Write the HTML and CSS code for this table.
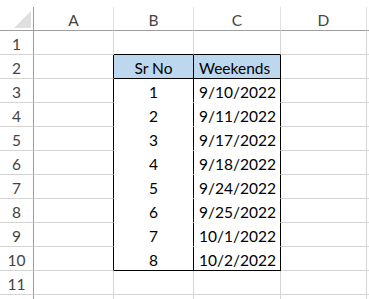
FILE: index.html
```html
<!DOCTYPE html>
<html>
<head>
<meta charset="utf-8">
<link rel="stylesheet" href="styles.css">
</head>
<body>
<div class="sheet">
  <div class="c corner"><span class="tri"></span></div>
  <div class="c ch">A</div>
  <div class="c ch">B</div>
  <div class="c ch">C</div>
  <div class="c ch">D</div>
  <div class="c ch end"></div>

  <div class="c rh">1</div>
  <div class="c"></div>
  <div class="c above"></div>
  <div class="c above"></div>
  <div class="c"></div>
  <div class="c end"></div>

  <div class="c rh">2</div>
  <div class="c left"></div>
  <div class="c t head mid">Sr No</div>
  <div class="c t head txt">Weekends</div>
  <div class="c"></div>
  <div class="c end"></div>

  <div class="c rh">3</div>
  <div class="c left"></div>
  <div class="c t mid">1</div>
  <div class="c t txt">9/10/2022</div>
  <div class="c"></div>
  <div class="c end"></div>

  <div class="c rh">4</div>
  <div class="c left"></div>
  <div class="c t mid">2</div>
  <div class="c t txt">9/11/2022</div>
  <div class="c"></div>
  <div class="c end"></div>

  <div class="c rh">5</div>
  <div class="c left"></div>
  <div class="c t mid">3</div>
  <div class="c t txt">9/17/2022</div>
  <div class="c"></div>
  <div class="c end"></div>

  <div class="c rh">6</div>
  <div class="c left"></div>
  <div class="c t mid">4</div>
  <div class="c t txt">9/18/2022</div>
  <div class="c"></div>
  <div class="c end"></div>

  <div class="c rh">7</div>
  <div class="c left"></div>
  <div class="c t mid">5</div>
  <div class="c t txt">9/24/2022</div>
  <div class="c"></div>
  <div class="c end"></div>

  <div class="c rh">8</div>
  <div class="c left"></div>
  <div class="c t mid">6</div>
  <div class="c t txt">9/25/2022</div>
  <div class="c"></div>
  <div class="c end"></div>

  <div class="c rh">9</div>
  <div class="c left"></div>
  <div class="c t mid">7</div>
  <div class="c t txt">10/1/2022</div>
  <div class="c"></div>
  <div class="c end"></div>

  <div class="c rh">10</div>
  <div class="c left"></div>
  <div class="c t last mid">8</div>
  <div class="c t last txt">10/2/2022</div>
  <div class="c"></div>
  <div class="c end"></div>

  <div class="c rh">11</div>
  <div class="c"></div>
  <div class="c"></div>
  <div class="c"></div>
  <div class="c"></div>
  <div class="c end"></div>

  <div class="c rh"></div>
  <div class="c"></div>
  <div class="c"></div>
  <div class="c"></div>
  <div class="c"></div>
  <div class="c end"></div>
</div>
</body>
</html>
```

FILE: styles.css
```css
html, body {
  margin: 0;
  padding: 0;
  background: #fff;
  overflow: hidden;
}
body {
  width: 369px;
  height: 299px;
}
.sheet {
  height: 299px;
  box-sizing: border-box;
  overflow: hidden;
  padding-top: 7px;
  display: grid;
  grid-template-columns: 34px 80px 80px 87px 86px 2px;
  grid-auto-rows: 24px;
  font-family: Lato, "Open Sans", sans-serif;
  font-size: 15.5px;
  color: #000;
}
.c {
  box-sizing: border-box;
  border-right: 1px solid #d4d4d4;
  border-bottom: 1px solid #d4d4d4;
  display: flex;
  align-items: center;
  padding-top: 2px;
  white-space: nowrap;
  overflow: hidden;
}
.end {
  border-right: none;
}
.corner {
  border-right: 1px solid #9e9e9e;
  border-bottom: 1px solid #9e9e9e;
  position: relative;
}
.tri {
  position: absolute;
  right: 2px;
  bottom: 2px;
  width: 0;
  height: 0;
  border-left: 17px solid transparent;
  border-bottom: 17px solid #dfdfdf;
}
.ch {
  justify-content: center;
  color: #444;
  border-right-color: #e1e1e1;
  border-bottom-color: #9e9e9e;
}
.rh {
  justify-content: center;
  color: #444;
  border-right-color: #9e9e9e;
}
.above {
  border-bottom-color: #000;
}
.left {
  border-right-color: #000;
}
.t {
  border-right-color: #000;
  border-bottom-color: #fff;
}
.head {
  background: #bdd7ee;
  border-bottom-color: #000;
}
.last {
  border-bottom-color: #000;
}
.mid {
  justify-content: center;
}
.txt {
  padding-left: 5px;
}
```
